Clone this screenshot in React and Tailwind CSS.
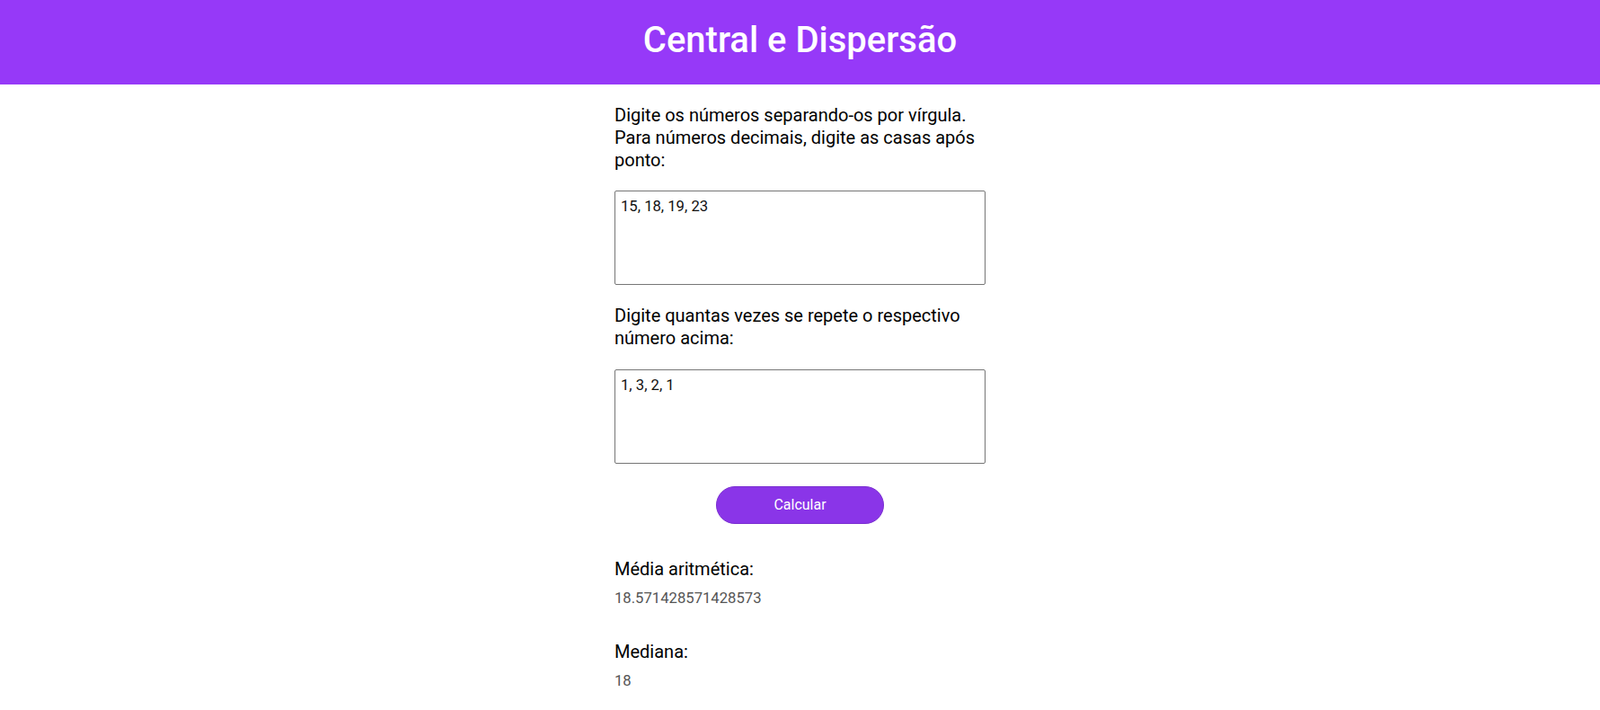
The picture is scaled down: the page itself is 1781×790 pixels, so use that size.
import { useState } from "react";

const Resultado = ({ titulo, valor, className = "" }) => (
  <div className={className}>
    <p className="text-[20px] leading-[25px] text-black">{titulo}</p>
    <p className="mt-[10px] text-[16.67px] leading-[20px] text-[#555555]">{valor}</p>
  </div>
);

export default function App() {
  const [numeros, setNumeros] = useState("15, 18, 19, 23");
  const [repeticoes, setRepeticoes] = useState("1, 3, 2, 1");

  return (
    <div className="min-h-screen bg-white font-['Roboto',sans-serif] text-black">
      <header className="h-[94px] bg-[#9639f8] flex items-center justify-center pb-[4px]">
        <h1 className="text-[40px] font-medium text-white">Central e Dispersão</h1>
      </header>

      <main className="flex justify-center pt-[22px]">
        <div className="w-[413px]">
          <p className="text-[20px] leading-[25px] pr-[8px]">
            Digite os números separando-os por vírgula. Para números decimais,
            digite as casas após ponto:
          </p>
          <textarea
            value={numeros}
            onChange={(e) => setNumeros(e.target.value)}
            className="mt-[21px] block w-[413px] h-[105px] border border-[#767676] rounded-[2px] px-[6px] py-[4px] text-[16.67px] text-[#111111] resize-none outline-none"
          />

          <p className="mt-[22px] text-[20px] leading-[25px] pr-[8px]">
            Digite quantas vezes se repete o respectivo número acima:
          </p>
          <textarea
            value={repeticoes}
            onChange={(e) => setRepeticoes(e.target.value)}
            className="mt-[22px] block w-[413px] h-[105px] border border-[#767676] rounded-[2px] px-[6px] py-[4px] text-[16.67px] text-[#111111] resize-none outline-none"
          />

          <div className="flex justify-center mt-[25px]">
            <button className="w-[187px] h-[42px] rounded-full bg-[#8a35e8] border border-[#7a2fd0] text-white text-[16px]">
              Calcular
            </button>
          </div>

          <Resultado className="mt-[38px]" titulo="Média aritmética:" valor="18.571428571428573" />
          <Resultado className="mt-[37px]" titulo="Mediana:" valor="18" />
        </div>
      </main>
    </div>
  );
}
